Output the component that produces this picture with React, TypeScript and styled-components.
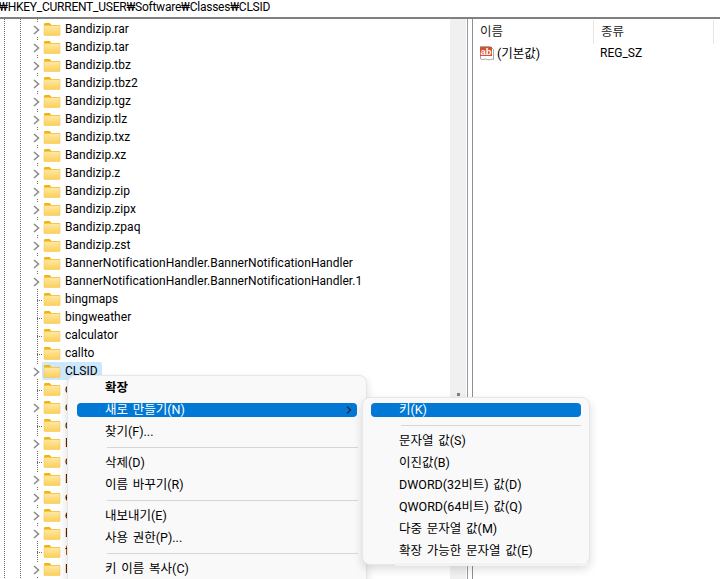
import styled, { createGlobalStyle } from 'styled-components'

const GlobalStyle = createGlobalStyle`
    html, body {
        margin: 0;
        height: 100%;
        overflow: hidden;
        background: #ffffff;
    }
    body {
        font-family: Roboto, "Noto Sans CJK KR", sans-serif;
        font-size: 12px;
        color: #000000;
    }
`

const Window = styled.div`
    position: relative;
    width: 720px;
    height: 579px;
    overflow: hidden;
`
const PathBar = styled.div`
    height: 17px;
    line-height: 15px;
    border-bottom: 2px solid #808080;
    white-space: nowrap;
    overflow: hidden;
    margin-left: -1px;
    letter-spacing: -0.24px;
`
const Body = styled.div`
    display: flex;
    height: 560px;
`
const Tree = styled.div`
    width: 450px;
    padding-top: 1px;
    overflow: hidden;
    background-image:
        linear-gradient(#6e6e6e 50%, transparent 50%),
        linear-gradient(#6e6e6e 50%, transparent 50%),
        linear-gradient(#6e6e6e 50%, transparent 50%);
    background-size: 1px 2px;
    background-position: 4px 0, 20px 0, 37px 0;
    background-repeat: repeat-y;
`
const Row = styled.div`
    display: flex;
    align-items: center;
    height: 18px;
    padding-left: 33px;
    white-space: nowrap;
`
const Expander = styled.span`
    display: flex;
    width: 7px;
    height: 15px;
    margin-right: 2px;
    margin-top: 1px;
    background: #ffffff;
`
const Stub = styled.span`
    width: 5px;
    height: 1px;
    margin: 2px 0 0 4px;
    background-image: linear-gradient(90deg, #6e6e6e 50%, transparent 50%);
    background-size: 2px 1px;
`
const Entry = styled.span<{ $selected?: boolean }>`
    display: flex;
    align-items: center;
    height: 18px;
    padding: 0 ${({ $selected }) => ($selected ? 4 : 1)}px 0 1px;
    border-radius: 2px;
    background: ${({ $selected }) => ($selected ? '#cce8ff' : '#ffffff')};
`
const Label = styled.span`
    margin-left: 4px;
    line-height: 18px;
    letter-spacing: 0.03px;
`
const ScrollTrack = styled.div`
    width: 16px;
    margin-right: 1px;
    padding-top: 374px;
    box-sizing: border-box;
    background: #f0f0f0;
`
const ScrollThumb = styled.div`
    width: 3px;
    height: 3px;
    margin-left: 7px;
    background: #808080;
`
const Splitter = styled.div`
    width: 4px;
    border-left: 1px solid #9a9a9a;
    border-right: 1px solid #86909c;
`
const ListPane = styled.div`
    flex: 1;
    padding-top: 1px;
`
const ListHeader = styled.div`
    display: flex;
    height: 24px;
`
const HeaderCell = styled.div<{ $width: number }>`
    width: ${({ $width }) => $width}px;
    box-sizing: border-box;
    padding-left: 7px;
    line-height: 24px;
    border-right: 1px solid #e5e5e5;
    color: #222222;
    font-size: 12.5px;
`
const ListRow = styled.div`
    display: flex;
    align-items: center;
    height: 17px;
    padding-left: 6px;
`
const ValueName = styled.span`
    width: 103px;
    margin-left: 2px;
    font-size: 12.5px;
`
const Menu = styled.div<{ $left: number; $top: number; $width: number; $height: number; $paddingTop: number }>`
    position: absolute;
    left: ${({ $left }) => $left}px;
    top: ${({ $top }) => $top}px;
    width: ${({ $width }) => $width}px;
    height: ${({ $height }) => $height}px;
    padding-top: ${({ $paddingTop }) => $paddingTop}px;
    box-sizing: border-box;
    display: flex;
    flex-direction: column;
    background: #f9f9f9;
    border: 1px solid #e6e6e6;
    border-radius: 8px;
    box-shadow: 0 4px 10px rgba(0, 0, 0, 0.14);
`
const Item = styled.div<{ $active?: boolean; $bold?: boolean; $indent: number; $inset: number }>`
    display: flex;
    flex: none;
    align-items: center;
    justify-content: space-between;
    height: 14px;
    margin: 4px ${({ $inset }) => $inset}px;
    padding: 0 5px 0 ${({ $indent }) => $indent}px;
    border-radius: 4px;
    line-height: 14px;
    white-space: nowrap;
    font-size: 12.5px;
    word-spacing: 1.7px;
    font-weight: ${({ $bold }) => ($bold ? 700 : 400)};
    color: ${({ $active }) => ($active ? '#ffffff' : '#000000')};
    background: ${({ $active }) => ($active ? '#0078d4' : 'transparent')};
`
const Separator = styled.div<{ $indent: number }>`
    flex: none;
    height: 1px;
    margin: 4px 8px 4px ${({ $indent }) => $indent}px;
    background: #d6d6d6;
`
const FooterStrip = styled.div`
    flex: none;
    height: 3px;
    margin: 1px 0 0 32px;
    background: #f2f2f2;
`

const FolderIcon = () => (
    <svg width="18" height="14" viewBox="0 0 18 14">
        <defs>
            <linearGradient id="folderFill" x1="0" y1="0" x2="0" y2="1">
                <stop offset="0" stopColor="#ffe9a6" />
                <stop offset="1" stopColor="#fccf57" />
            </linearGradient>
        </defs>
        <path d="M1 2.5C1 1.7 1.6 1 2.4 1H6.5L8.5 3H17V5H1Z" fill="#f5b301" />
        <rect x="1" y="3.5" width="16" height="10" rx="0.6" fill="url(#folderFill)" stroke="#f2c14e" strokeWidth="0.5" />
    </svg>
)

const Chevron = () => (
    <svg width="7" height="15" viewBox="0 0 7 15">
        <path d="M1 4L5.5 8L1 12" fill="none" stroke="#8c8c8c" strokeWidth="1.6" />
    </svg>
)

const StringValueIcon = () => (
    <svg width="16" height="16" viewBox="0 0 16 16">
        <path d="M1.5 1.5H11.5L14.5 4.5V14.5C12.5 13.3 11 15.7 8.5 14.5C6 13.3 4 15.3 1.5 14Z" fill="#ffffff" stroke="#a8a8a8" />
        <rect x="1" y="2" width="12" height="9" fill="#d8502f" />
        <text x="7" y="9.5" textAnchor="middle" fontSize="9.5" fontWeight="700" fontFamily="Liberation Sans, sans-serif" fill="#ffffff">ab</text>
    </svg>
)

const SubmenuArrow = () => (
    <svg width="6" height="8" viewBox="0 0 6 8">
        <path d="M1 0.5L4.5 4L1 7.5" fill="none" stroke="#1b2b3a" strokeWidth="1.3" />
    </svg>
)

const rows: { name: string; branch?: boolean; selected?: boolean }[] = [
    { name: 'Bandizip.rar', branch: true },
    { name: 'Bandizip.tar', branch: true },
    { name: 'Bandizip.tbz', branch: true },
    { name: 'Bandizip.tbz2', branch: true },
    { name: 'Bandizip.tgz', branch: true },
    { name: 'Bandizip.tlz', branch: true },
    { name: 'Bandizip.txz', branch: true },
    { name: 'Bandizip.xz', branch: true },
    { name: 'Bandizip.z', branch: true },
    { name: 'Bandizip.zip', branch: true },
    { name: 'Bandizip.zipx', branch: true },
    { name: 'Bandizip.zpaq', branch: true },
    { name: 'Bandizip.zst', branch: true },
    { name: 'BannerNotificationHandler.BannerNotificationHandler', branch: true },
    { name: 'BannerNotificationHandler.BannerNotificationHandler.1', branch: true },
    { name: 'bingmaps' },
    { name: 'bingweather' },
    { name: 'calculator' },
    { name: 'callto' },
    { name: 'CLSID', branch: true, selected: true },
    { name: 'cda' },
    { name: 'cdafile', branch: true },
    { name: 'ceb' },
    { name: 'Diagnostic', branch: true },
    { name: 'chm' },
    { name: 'Drive', branch: true },
    { name: 'exefile', branch: true },
    { name: 'epub', branch: true },
    { name: 'Excel', branch: true },
    { name: 'feed' },
    { name: 'Folder', branch: true },
]

const mainMenu = [
    { label: '확장', bold: true },
    { label: '새로 만들기(N)', active: true },
    { label: '찾기(F)...' },
    { separator: true },
    { label: '삭제(D)' },
    { label: '이름 바꾸기(R)' },
    { separator: true },
    { label: '내보내기(E)' },
    { label: '사용 권한(P)...' },
    { separator: true },
    { label: '키 이름 복사(C)' },
]

const subMenu = [
    { label: '키(K)', active: true },
    { separator: true },
    { label: '문자열 값(S)' },
    { label: '이진값(B)' },
    { label: 'DWORD(32비트) 값(D)' },
    { label: 'QWORD(64비트) 값(Q)' },
    { label: '다중 문자열 값(M)' },
    { label: '확장 가능한 문자열 값(E)' },
]

type MenuEntry = { label?: string; bold?: boolean; active?: boolean; separator?: boolean }

const renderEntries = (entries: MenuEntry[], inset: number, indent: number, separatorIndent: number, arrow: boolean) =>
    entries.map((entry, i) =>
        entry.separator ? (
            <Separator key={i} $indent={separatorIndent} />
        ) : (
            <Item key={i} $active={entry.active} $bold={entry.bold} $inset={inset} $indent={indent}>
                {entry.label}
                {arrow && entry.active && <SubmenuArrow />}
            </Item>
        )
    )

export default function App() {
    return (
        <Window>
            <GlobalStyle />
            <PathBar>₩HKEY_CURRENT_USER₩Software₩Classes₩CLSID</PathBar>
            <Body>
                <Tree>
                    {rows.map((row) => (
                        <Row key={row.name}>
                            {row.branch ? (
                                <Expander><Chevron /></Expander>
                            ) : (
                                <Stub />
                            )}
                            <Entry $selected={row.selected}>
                                <FolderIcon />
                                <Label>{row.name}</Label>
                            </Entry>
                        </Row>
                    ))}
                </Tree>
                <ScrollTrack>
                    <ScrollThumb />
                </ScrollTrack>
                <Splitter />
                <ListPane>
                    <ListHeader>
                        <HeaderCell $width={121}>이름</HeaderCell>
                        <HeaderCell $width={120}>종류</HeaderCell>
                    </ListHeader>
                    <ListRow>
                        <StringValueIcon />
                        <ValueName>(기본값)</ValueName>
                        <span>REG_SZ</span>
                    </ListRow>
                </ListPane>
            </Body>
            <Menu $left={67} $top={375} $width={300} $height={230} $paddingTop={1}>
                {renderEntries(mainMenu, 9, 28, 39, true)}
            </Menu>
            <Menu $left={362} $top={397} $width={228} $height={168} $paddingTop={1}>
                {renderEntries(subMenu, 8, 28, 38, false)}
                <FooterStrip />
            </Menu>
        </Window>
    )
}
